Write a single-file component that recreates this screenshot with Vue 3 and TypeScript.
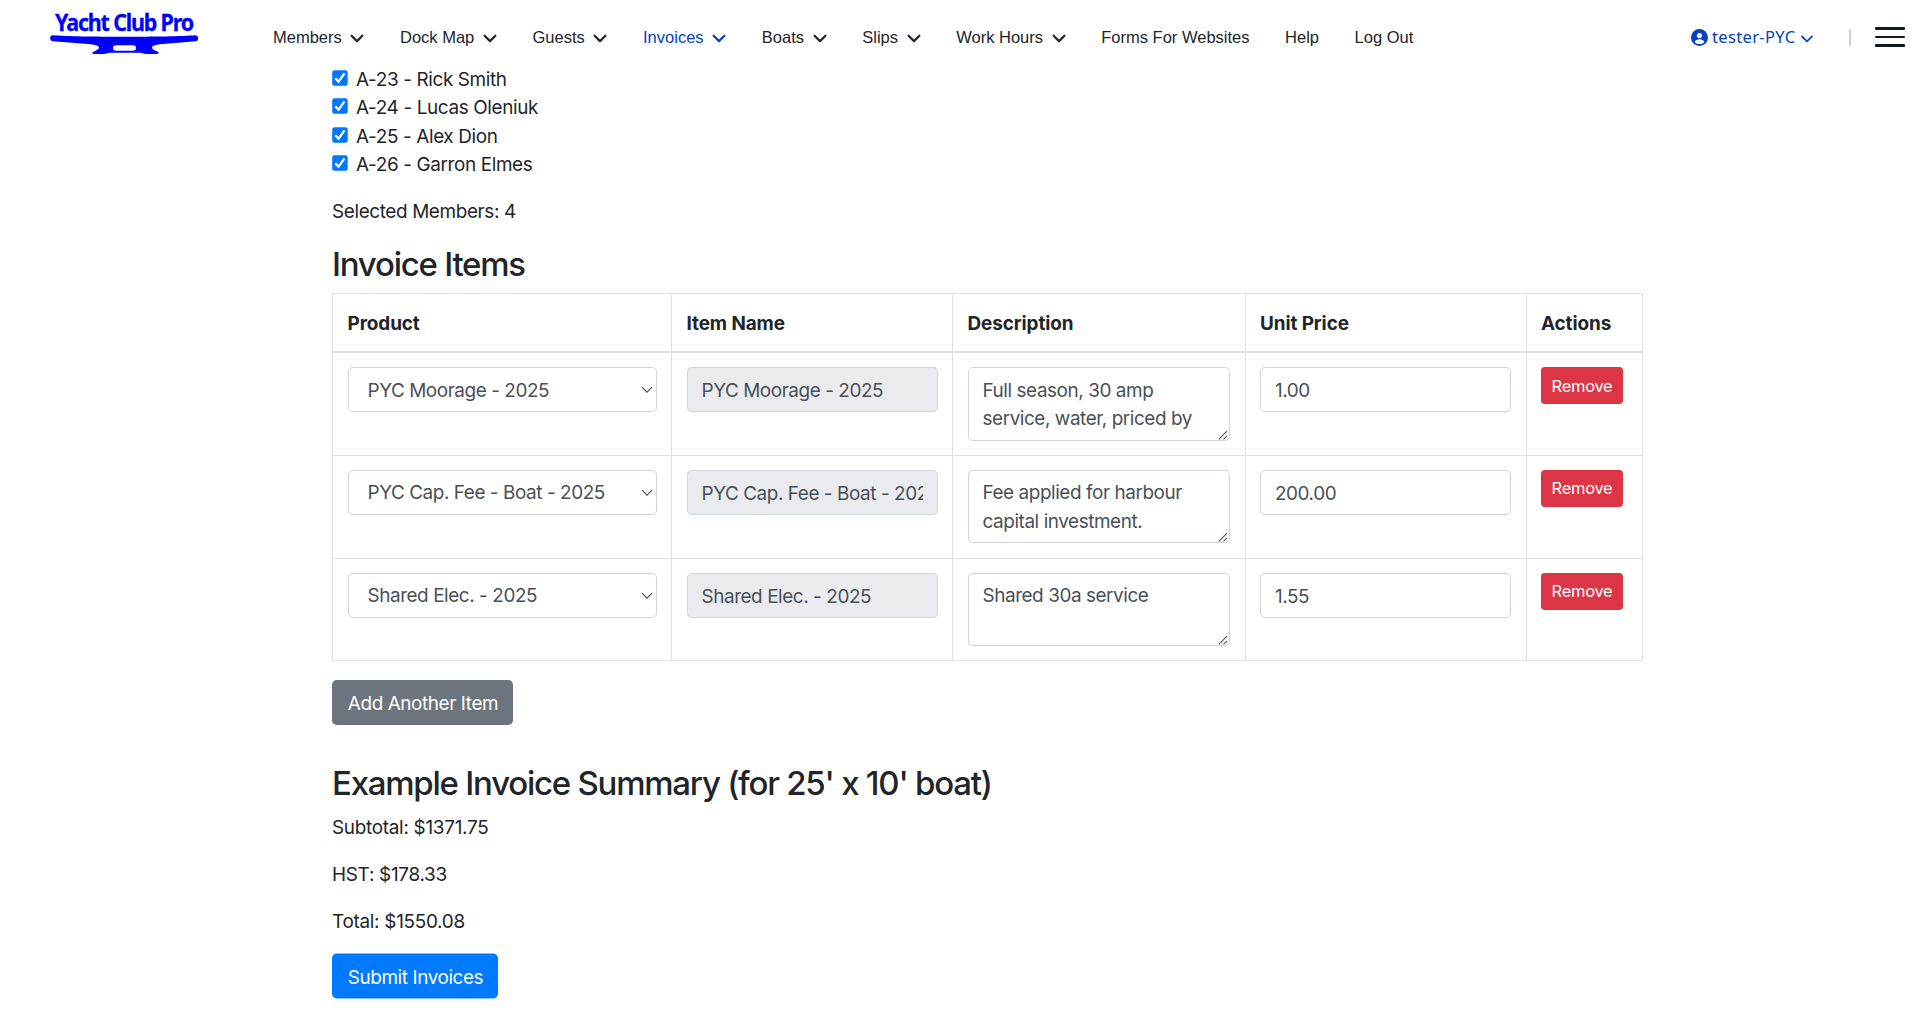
<script setup lang="ts">
import { ref } from 'vue'

interface NavItem {
  label: string
  menu: boolean
  active?: boolean
}

interface InvoiceItem {
  product: string
  description: string
  price: string
}

const nav: NavItem[] = [
  { label: 'Members', menu: true },
  { label: 'Dock Map', menu: true },
  { label: 'Guests', menu: true },
  { label: 'Invoices', menu: true, active: true },
  { label: 'Boats', menu: true },
  { label: 'Slips', menu: true },
  { label: 'Work Hours', menu: true },
  { label: 'Forms For Websites', menu: false },
  { label: 'Help', menu: false },
  { label: 'Log Out', menu: false },
]

const members = ['A-23 - Rick Smith', 'A-24 - Lucas Oleniuk', 'A-25 - Alex Dion', 'A-26 - Garron Elmes']

const items = ref<InvoiceItem[]>([
  { product: 'PYC Moorage - 2025', description: 'Full season, 30 amp service, water, priced by', price: '1.00' },
  { product: 'PYC Cap. Fee - Boat - 2025', description: 'Fee applied for harbour capital investment.', price: '200.00' },
  { product: 'Shared Elec. - 2025', description: 'Shared 30a service', price: '1.55' },
])
</script>

<template>
  <div class="page">
    <header class="topbar">
      <svg class="logo" width="150" height="58" viewBox="0 -10 150 58" fill="#0000ff">
        <text x="5" y="22" textLength="138" lengthAdjust="spacingAndGlyphs">Yacht Club Pro</text>
        <path fill-rule="evenodd" d="M3 26.200C28 28.200 120 28.200 145 26.200C149.200 26 149.200 31.800 145.500 32.200L110 35.300C102 36.300 100 38.500 104 41L108 42.800C109.500 44 108.500 45 106 45H96L90 43.800H60L54 45H44.500C42 45 41.500 44 43 43L47 41C51 38.500 49 36.300 41 35.300L3 32.200C-.8 31.800-.8 26 3 26.200ZM66 36.300Q63 36.500 63 39T66 41.700H83Q86 41.500 86 39T83 36.300Z" />
      </svg>
      <nav class="nav">
        <a v-for="n in nav" :key="n.label" :class="{ active: n.active }">
          <span>{{ n.label }}</span>
          <svg v-if="n.menu" width="14" height="9" viewBox="0 0 14 9" fill="none" stroke="currentColor" stroke-width="2.200" stroke-linecap="round" stroke-linejoin="round">
            <path d="M1.600 1.700L7 7.100L12.400 1.700" />
          </svg>
        </a>
      </nav>
      <div class="account">
        <svg width="17" height="17" viewBox="0 0 17 17">
          <circle cx="8.500" cy="8.500" r="8.500" fill="#0540bf" />
          <circle cx="8.500" cy="6.600" r="2.600" fill="#fff" />
          <path d="M3.700 13.200C4.300 11 6.200 10.200 8.500 10.200S12.700 11 13.300 13.200C12 14.500 10.300 15.100 8.500 15.100S5 14.500 3.700 13.200Z" fill="#fff" />
        </svg>
        <span class="user">tester-PYC</span>
        <svg width="12" height="8" viewBox="0 0 12 8" fill="none" stroke="#0540bf" stroke-width="1.700" stroke-linecap="round" stroke-linejoin="round">
          <path d="M1 1.300L6 6.300L11 1.300" />
        </svg>
      </div>
      <span class="divider"></span>
      <div class="burger"><i></i><i></i><i></i></div>
    </header>

    <main class="content">
      <ul class="members">
        <li v-for="m in members" :key="m">
          <svg width="16" height="16" viewBox="0 0 16 16">
            <rect x=".2" y=".2" width="15.500" height="15.500" rx="2.500" fill="#0075ff" />
            <path d="M3.300 8.300L6.500 11.600L12.500 3.400" fill="none" stroke="#fff" stroke-width="2.300" />
          </svg>
          <span>{{ m }}</span>
        </li>
      </ul>
      <p class="selected">Selected Members: 4</p>

      <h3 class="items-title">Invoice Items</h3>
      <table>
        <colgroup>
          <col class="c1" /><col class="c2" /><col class="c3" /><col class="c4" /><col class="c5" />
        </colgroup>
        <thead>
          <tr>
            <th>Product</th>
            <th>Item Name</th>
            <th>Description</th>
            <th>Unit Price</th>
            <th>Actions</th>
          </tr>
        </thead>
        <tbody>
          <tr v-for="item in items" :key="item.product">
            <td>
              <div class="field">
                <select class="control">
                  <option>{{ item.product }}</option>
                </select>
                <svg class="caret" width="12" height="8" viewBox="0 0 12 8" fill="none" stroke="#444b52" stroke-width="1.100">
                  <path d="M1 1.200L6 6.200L11 1.200" />
                </svg>
              </div>
            </td>
            <td><input class="control" type="text" :value="item.product" readonly /></td>
            <td>
              <div class="field">
                <textarea class="control" rows="2" :value="item.description"></textarea>
                <svg class="grip" width="10" height="10" viewBox="0 0 10 10" stroke="#555" stroke-width="1.100">
                  <path d="M.8 9.300L9 1.100M5.500 9.300L9 5.800" />
                </svg>
              </div>
            </td>
            <td><input class="control" type="text" :value="item.price" /></td>
            <td><button class="btn remove" type="button">Remove</button></td>
          </tr>
        </tbody>
      </table>
      <button class="btn add" type="button">Add Another Item</button>

      <h3 class="summary-title">Example Invoice Summary (for 25' x 10' boat)</h3>
      <p class="sum">Subtotal: $1371.75</p>
      <p class="sum">HST: $178.33</p>
      <p class="sum">Total: $1550.08</p>
      <button class="btn submit" type="button">Submit Invoices</button>
    </main>
  </div>
</template>

<style>
body {
  margin: 0;
  background: #fff;
}
</style>

<style scoped>
.page {
  box-sizing: border-box;
  height: 1031px;
  overflow: hidden;
  color: #212529;
  font-family: Inter, "Liberation Sans", sans-serif;
  font-size: 18.9px;
  line-height: 28.3px;
  letter-spacing: -0.36px;
}
.topbar {
  display: flex;
  align-items: center;
  box-sizing: border-box;
  height: 65px;
  padding: 0 15px 0 50px;
  letter-spacing: 0;
}
.logo {
  flex: none;
  margin-top: -9px;
  overflow: visible;
}
.logo text {
  font: bold 23.5px "Noto Sans", sans-serif;
  letter-spacing: -1.3px;
  stroke: #0000ff;
  stroke-width: 0.3px;
}
.nav {
  display: flex;
  gap: 35.6px;
  margin: 9px 0 0 73px;
  font: 16.5px/20px "Liberation Sans", Arial, sans-serif;
  white-space: nowrap;
}
.nav a {
  display: flex;
  align-items: center;
  gap: 8.65px;
}
.nav svg {
  margin-top: 2px;
}
.nav .active {
  color: #0540bf;
}
.account {
  display: flex;
  align-items: center;
  margin: 9px 0 0 auto;
  color: #0540bf;
}
.user {
  width: 84px;
  margin: 0 5px 0 4.500px;
  font: 16.5px/20px "Noto Sans", sans-serif;
  letter-spacing: 0.35px;
  white-space: nowrap;
}
.account svg:last-child {
  margin-top: 4px;
}
.divider {
  width: 2px;
  height: 17px;
  margin: 10px 24px 0 36px;
  background: #ccd1d8;
}
.burger {
  display: flex;
  flex-direction: column;
  gap: 6px;
  width: 30px;
  margin-top: 9px;
}
.burger i {
  height: 2.4px;
  border-radius: 1px;
  background: #111820;
}
.content {
  width: 1311px;
  margin-left: 332px;
}
.members {
  margin: 0;
  padding: 1px 0 0;
  list-style: none;
}
.members li {
  display: flex;
  gap: 8px;
}
.members svg {
  margin-top: 4px;
}
p {
  margin: 0 0 18.9px;
}
.selected {
  margin-top: 18.9px;
}
h3 {
  margin: 0;
  font-size: 33px;
  font-weight: 500;
  line-height: 39.6px;
  letter-spacing: -1.24px;
}
.items-title {
  margin: 19px 0 8px;
}
table {
  width: 1311px;
  table-layout: fixed;
  border-collapse: collapse;
}
.c1 { width: 339px; }
.c2 { width: 281px; }
.c3 { width: 292.500px; }
.c4 { width: 281px; }
.c5 { width: 116.500px; }
th,
td {
  border: 1px solid #dee2e6;
  text-align: left;
  vertical-align: top;
}
th {
  height: 28px;
  padding: 16px 14.500px 13px;
  border-bottom-width: 2px;
  font-weight: 700;
  letter-spacing: -0.08px;
}
td {
  height: 73.700px;
  padding: 14px 14.500px;
}
.field {
  position: relative;
  height: 73.500px;
}
.control {
  display: block;
  box-sizing: border-box;
  width: 100%;
  height: 45px;
  margin: 0;
  padding: 8px 14px 6px;
  border: 1px solid #ced4da;
  border-radius: 4.700px;
  outline: 0;
  background: #fff;
  color: #495057;
  font: inherit;
  letter-spacing: -0.42px;
}
select.control {
  appearance: none;
  padding-left: 19px;
}
textarea.control {
  height: 73.500px;
  padding-top: 8.500px;
  overflow: hidden;
  resize: none;
}
.control[readonly] {
  background: #e9ebee;
}
.caret {
  position: absolute;
  top: 19px;
  right: 4px;
}
.grip {
  position: absolute;
  right: 2px;
  bottom: 1px;
}
.btn {
  display: block;
  box-sizing: border-box;
  height: 45px;
  margin: 0;
  padding: 2px 0 0 1px;
  border: 0;
  border-radius: 4.700px;
  color: #fff;
  font: inherit;
  letter-spacing: -0.4px;
  white-space: nowrap;
}
.remove {
  width: 82px;
  height: 37px;
  padding: 0;
  border-radius: 3.800px;
  background: #dc3545;
  font-size: 16.500px;
  letter-spacing: -0.3px;
}
.add {
  width: 181px;
  margin-top: 19px;
  background: #6c757d;
}
.summary-title {
  margin: 39px 0 10px;
}
.sum {
  letter-spacing: -0.28px;
}
.submit {
  width: 166px;
  margin-top: -1px;
  background: #007bff;
}
.sum + .submit {
  margin-top: -20px;
  transform: translateY(18.5px);
}
</style>
